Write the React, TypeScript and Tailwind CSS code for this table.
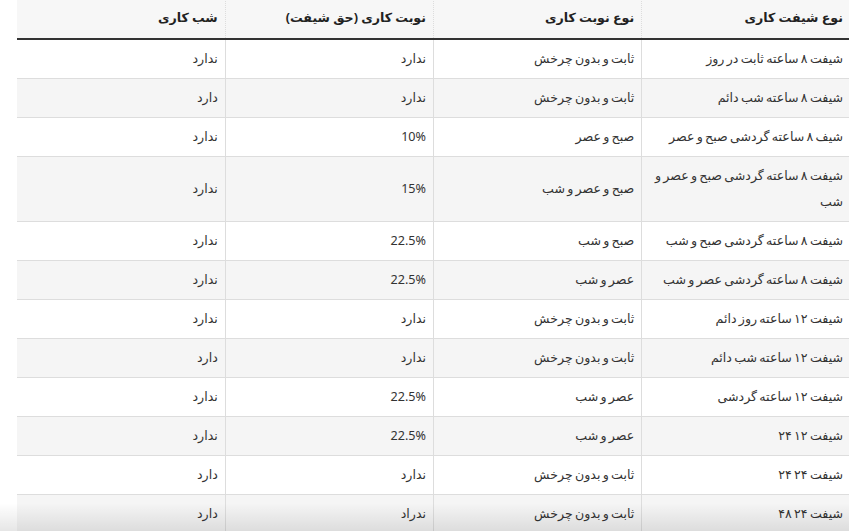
const headers = ['نوع شیفت کاری', 'نوع نوبت کاری', 'نوبت کاری (حق شیفت)', 'شب کاری']

const rows: string[][] = [
  ['شیفت ۸ ساعته ثابت در روز', 'ثابت و بدون چرخش', 'ندارد', 'ندارد'],
  ['شیفت ۸ ساعته شب دائم', 'ثابت و بدون چرخش', 'ندارد', 'دارد'],
  ['شیف ۸ ساعته گردشی صبح و عصر', 'صبح و عصر', '10%', 'ندارد'],
  ['شیفت ۸ ساعته گردشی صبح و عصر و شب', 'صبح و عصر و شب', '15%', 'ندارد'],
  ['شیفت ۸ ساعته گردشی صبح و شب', 'صبح و شب', '22.5%', 'ندارد'],
  ['شیفت ۸ ساعته گردشی عصر و شب', 'عصر و شب', '22.5%', 'ندارد'],
  ['شیفت ۱۲ ساعته روز دائم', 'ثابت و بدون چرخش', 'ندارد', 'ندارد'],
  ['شیفت ۱۲ ساعته شب دائم', 'ثابت و بدون چرخش', 'ندارد', 'دارد'],
  ['شیفت ۱۲ ساعته گردشی', 'عصر و شب', '22.5%', 'ندارد'],
  ['شیفت ۱۲ ۲۴', 'عصر و شب', '22.5%', 'ندارد'],
  ['شیفت ۲۴ ۲۴', 'ثابت و بدون چرخش', 'ندارد', 'دارد'],
  ['شیفت ۲۴ ۴۸', 'ثابت و بدون چرخش', 'ندراد', 'دارد'],
]

export default function App() {
  return (
    <div className="relative h-[531px] overflow-hidden bg-white pl-[17px] font-['Noto_Sans','DejaVu_Sans',sans-serif] text-[12.6px] text-[#333]">
      <table dir="rtl" className="-mt-[2px] w-[833px] table-fixed border-collapse">
        <thead>
          <tr className="bg-[#f7f7f7]">
            {headers.map((h, i) => (
              <th
                key={h}
                className={
                  'border-b-2 border-b-[#333] px-[7px] py-[7px] text-right font-bold leading-[26px] text-[#222]' +
                  (i < 3 ? ' border-l border-l-[#ddd] [border-left-style:dotted]' : '')
                }
              >
                {h}
              </th>
            ))}
          </tr>
        </thead>
        <tbody>
          {rows.map((r, ri) => (
            <tr key={ri} className={ri % 2 === 1 ? 'bg-[#f5f5f5]' : 'bg-white'}>
              {r.map((c, ci) => (
                <td
                  key={ci}
                  className={
                    'border-b border-[#ddd] px-[7px] py-[6px] text-right align-middle leading-[26px] [word-spacing:-1px]' +
                    (ci < 3 ? ' border-l' : '')
                  }
                >
                  {c}
                </td>
              ))}
            </tr>
          ))}
        </tbody>
      </table>
      {/* fade at the bottom of the shot */}
      <div className="pointer-events-none absolute inset-x-0 bottom-0 h-[28px] bg-linear-to-b from-transparent to-black/10" />
    </div>
  )
}
